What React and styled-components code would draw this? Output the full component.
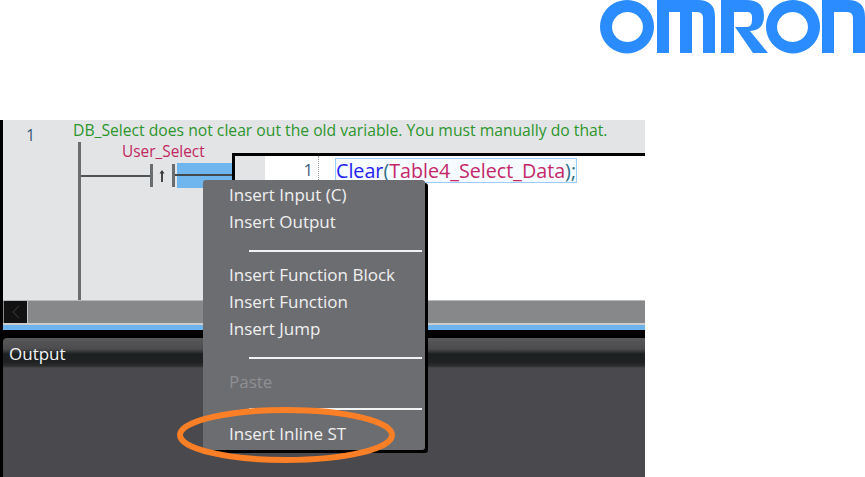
import React from 'react';
import styled, {createGlobalStyle} from 'styled-components';

const EstiloGlobal = createGlobalStyle`
	html, body {
		margin: 0;
		padding: 0;
		background: #fff;
		font-family: "Open Sans", "Liberation Sans", sans-serif;
	}
`;

const Logo = () => (
	<LogoSvg viewBox="0 0 265 54" width="265" height="54">
		<path fillRule="evenodd" d="M27 0a27 26.7 0 1 0 0.01 0ZM27.5 12a15.5 15 0 1 1-0.01 0Z" />
		<path d="M57 0H98Q115 0 115 17V53H103V18Q103 12 97 12H92V53H80V12H69V53H57Z" />
		<path d="M121 0H146Q164 0 164 16Q164 30 150 31L168 53H153L135 27H147Q152 27 152 20V17Q152 12 147 12H134V53H121Z" />
		<path fillRule="evenodd" d="M193 0a27 26.7 0 1 0 0.01 0ZM192.5 12a15.5 15 0 1 1-0.01 0Z" />
		<path d="M222 0H248Q265 0 265 17V53H253V18Q253 12 247 12H234V53H222Z" />
	</LogoSvg>
);

const Contacto = () => (
	<svg width="27" height="25" viewBox="0 0 27 25">
		<rect x="0" y="1" width="3" height="23" fill="#6a6d6f" />
		<rect x="22" y="1" width="3" height="23" fill="#6a6d6f" />
		<rect x="25" y="11" width="2" height="2" fill="#44494b" />
		<path d="M12 19V9" stroke="#44484a" strokeWidth="2" fill="none" />
		<path d="M9.5 10.5L12 7L14.5 10.5Z" fill="#33373a" />
	</svg>
);

const elementosMenu = [
	{texto: 'Insert Input (C)'},
	{texto: 'Insert Output'},
	{separador: true, arriba: 14, abajo: 10},
	{texto: 'Insert Function Block'},
	{texto: 'Insert Function'},
	{texto: 'Insert Jump'},
	{separador: true, arriba: 14, abajo: 10},
	{texto: 'Paste', desactivado: true},
	{separador: true, arriba: 12, abajo: 11},
	{texto: 'Insert Inline ST'},
];

const App = () => {
	return (
		<Pagina>
			<EstiloGlobal />
			<Cabecera>
				<Logo />
			</Cabecera>
			<Captura>
				<Editor>
					<NumeroFila>1</NumeroFila>
					<Comentario>DB_Select does not clear out the old variable. You must manually do that.</Comentario>
					<Escalera>
						<Variable>User_Select</Variable>
						<Rama>
							<Cable />
							<Contacto />
							<Seleccion />
						</Rama>
					</Escalera>
					<CajaST>
						<Margen />
						<NumeroLinea>1</NumeroLinea>
						<Codigo>
							<Funcion>Clear</Funcion>
							<Parentesis>(</Parentesis>
							<Dato>Table4_Select_Data</Dato>
							<Parentesis>);</Parentesis>
						</Codigo>
					</CajaST>
				</Editor>
				<BarraDesplazamiento>
					<BotonIzquierda>
						<svg width="10" height="14" viewBox="0 0 10 14">
							<path d="M8 1L2 7L8 13" stroke="#2b2b2b" strokeWidth="1.5" fill="none" />
						</svg>
					</BotonIzquierda>
				</BarraDesplazamiento>
				<LineaClara />
				<LineaAzul />
				<PanelSalida>
					<TituloSalida>Output</TituloSalida>
				</PanelSalida>

				<Menu>
					{elementosMenu.map((el, i) => el.separador
						? <Separador key={i} $arriba={el.arriba} $abajo={el.abajo} />
						: <Elemento key={i} $desactivado={el.desactivado}>{el.texto}</Elemento>
					)}
				</Menu>
				<Resaltado width="226" height="62" viewBox="0 0 226 62">
					<ellipse cx="113" cy="31" rx="106" ry="25" fill="none" stroke="#fb7f26" strokeWidth="6" />
				</Resaltado>
			</Captura>
		</Pagina>
	);
}

const Pagina = styled.div`
	width: 865px;
	height: 477px;
	overflow: hidden;
	display: flex;
	flex-direction: column;
`;

const Cabecera = styled.header`
	height: 120px;
	flex-shrink: 0;
	display: flex;
	justify-content: flex-end;
	align-items: flex-start;
`;

const LogoSvg = styled.svg`
	display: block;
	fill: #2b8cff;
`;

const Captura = styled.div`
	position: relative;
	width: 645px;
	height: 357px;
	box-sizing: border-box;
	padding-left: 3px;
	background: #000;
	display: flex;
	flex-direction: column;
`;

const Editor = styled.div`
	height: 180px;
	flex-shrink: 0;
	background: #e3e4e6;
	display: grid;
	grid-template-columns: 70px 5px 154px 1fr;
	grid-template-rows: 22px 1fr;
`;

const NumeroFila = styled.div`
	grid-column: 1;
	grid-row: 1;
	padding: 6px 0 0 23px;
	font-size: 16px;
	line-height: 18px;
	color: #3a5a78;
`;

const Comentario = styled.div`
	grid-column: 2 / -1;
	grid-row: 1;
	font-size: 15.7px;
	line-height: 20px;
	white-space: nowrap;
	color: #2c962c;
`;

const Escalera = styled.div`
	grid-column: 3;
	grid-row: 2;
	border-left: 3px solid #6c6d6f;
`;

const Variable = styled.div`
	height: 21px;
	margin-left: 41px;
	font-size: 15.4px;
	line-height: 20px;
	color: #c2285f;
`;

const Rama = styled.div`
	display: flex;
	align-items: center;
	height: 25px;
`;

const Cable = styled.div`
	width: 69px;
	height: 2px;
	background: #4e5355;
`;

const Seleccion = styled.div`
	flex: 1;
	height: 25px;
	background: linear-gradient(#6fb5ee 11px, #44494b 11px, #44494b 13px, #6fb5ee 13px);
`;

const CajaST = styled.div`
	grid-column: 4;
	grid-row: 2;
	margin-top: 11px;
	border-top: 3px solid #000;
	border-left: 3px solid #000;
	background: #fff;
	display: flex;
	align-items: flex-start;
`;

const Margen = styled.div`
	align-self: stretch;
	width: 30px;
	background: #e3e4e6;
`;

const NumeroLinea = styled.div`
	align-self: stretch;
	width: 48px;
	padding-right: 5px;
	border-right: 1px dotted #999;
	text-align: right;
	font-size: 16px;
	line-height: 28px;
	color: #3a5a78;
`;

const Codigo = styled.div`
	margin: 2px 0 0 16px;
	height: 23px;
	padding: 0;
	border: 1px solid #9ccbf7;
	background: #f6fbff;
	font-size: 19.7px;
	line-height: 23px;
	white-space: nowrap;
`;

const Funcion = styled.span`
	color: #2222f0;
`;

const Parentesis = styled.span`
	color: #2f6f88;
`;

const Dato = styled.span`
	color: #c4286a;
`;

const BarraDesplazamiento = styled.div`
	height: 22px;
	flex-shrink: 0;
	border-top: 1px solid #b9babb;
	background: #878889;
	display: flex;
`;

const BotonIzquierda = styled.div`
	width: 23px;
	margin-left: 1px;
	background: #111;
	border-right: 1px solid #c4c5c6;
	display: flex;
	align-items: center;
	justify-content: center;
`;

const LineaClara = styled.div`
	height: 2px;
	flex-shrink: 0;
	background: #cbcccd;
`;

const LineaAzul = styled.div`
	height: 5px;
	flex-shrink: 0;
	margin-bottom: 8px;
	background: #6db3ee;
`;

const PanelSalida = styled.div`
	flex: 1;
	border-radius: 4px 0 0 0;
	background: linear-gradient(#58585a 0, #4c4c4e 11px, #1c1f20 16px, #1f2122 24px, #2c2e2e 28px, #4a494d 30px);
`;

const TituloSalida = styled.div`
	padding: 5px 0 0 6px;
	font-size: 17px;
	line-height: 22px;
	color: #f2f4f6;
`;

const Menu = styled.div`
	position: absolute;
	left: 203px;
	top: 60px;
	width: 222px;
	height: 270px;
	box-sizing: border-box;
	padding-top: 1px;
	border-radius: 3px;
	background: #6c6d71;
	box-shadow: 3px 3px 0 #000;
`;

const Elemento = styled.div`
	height: 27px;
	padding-left: 26px;
	font-size: 17px;
	line-height: 27px;
	white-space: nowrap;
	color: ${({$desactivado}) => $desactivado ? '#8e8f93' : '#f0f0f0'};
`;

const Separador = styled.div`
	height: 2px;
	margin: ${({$arriba, $abajo}) => `${$arriba + 1}px 3px ${$abajo - 1}px 46px`};
	background: #f2f2f2;
`;

const Resaltado = styled.svg`
	position: absolute;
	left: 173px;
	top: 284px;
`;

export default App;
